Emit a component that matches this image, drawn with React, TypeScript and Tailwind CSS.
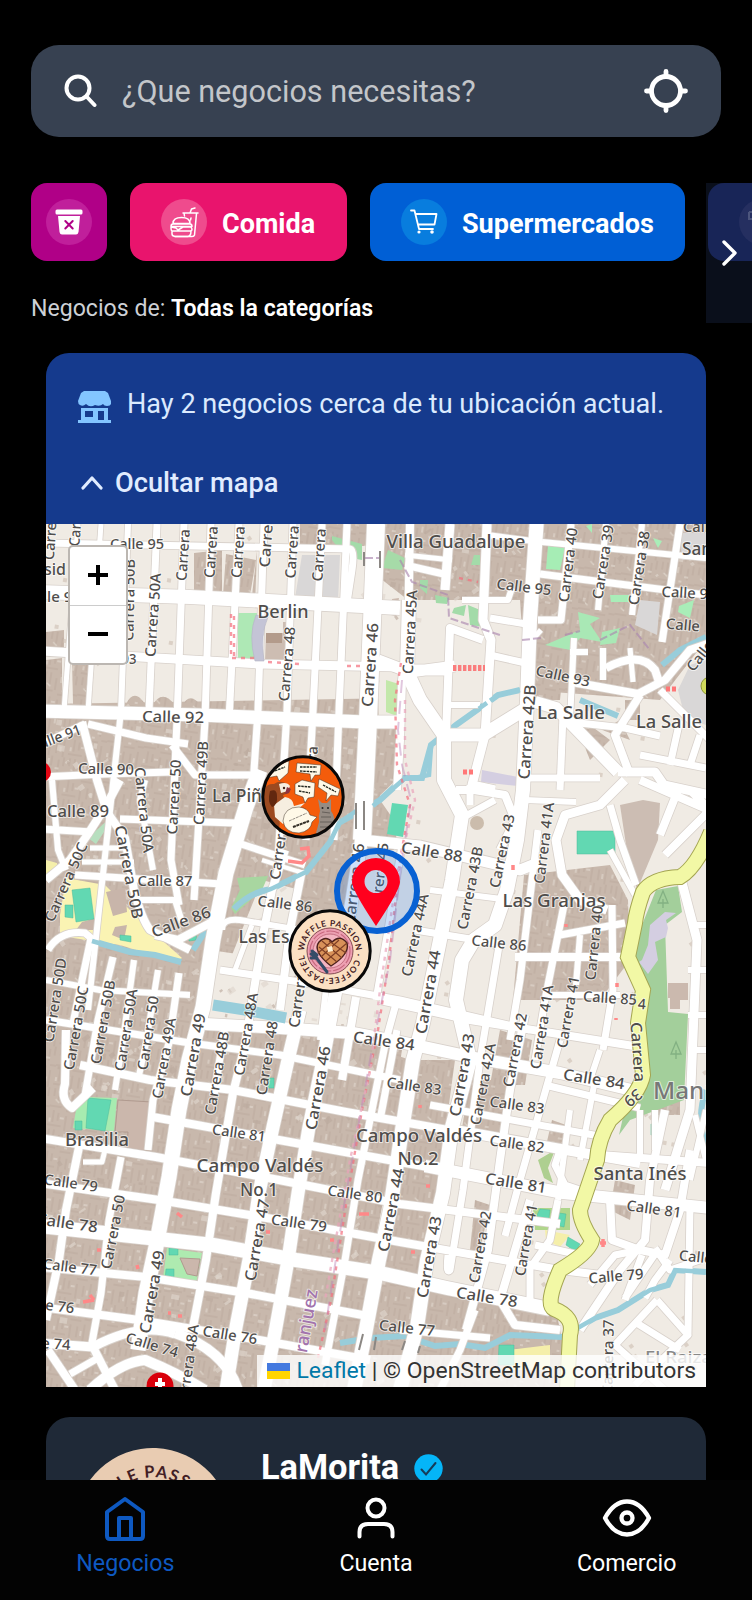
import React from "react";

type Label = [string, number, number, number, number, number?, string?];
type Road = [string, number];

const placeSize = 18;

const labels: Label[] = [
  ["Calle 95", 137, 544, 0, 54], ["Carrera", 183, 555, -86, 52], ["Carrera", 211, 552, -86, 52], ["Carrera", 238, 552, -86, 52],
  ["Carre", 266, 546, -86, 43], ["Carrera", 292, 552, -86, 53], ["Carrera", 319, 555, -86, 53], ["Carre", 50, 541, -86, 38],
  ["Car", 75, 535, -86, 23], ["sid", 55, 569, 0, 22, 17], ["lle 95", 62, 597, 0, 38, 15], ["Carrera 50B", 129, 600, -89, 82],
  ["Carrera 50A", 153, 615, -86, 84], ["93", 129, 659, 0, 15], ["Berlin", 283, 612, 0, 51, placeSize], ["Carrera 48", 287, 664, -85, 75],
  ["Carrera 46", 370, 665, -86, 84, 15.5], ["Calle 92", 173, 717, 1, 62, 15.5], ["Calle 91", 56, 738, -20, 52], ["Calle 90", 106, 769, 1, 56],
  ["Carrera 50", 174, 797, -87, 75], ["Carrera 49B", 201, 783, -87, 84], ["Carrera 50A", 144, 810, 84, 86], ["Carrera 50B", 129, 872, 79, 95, 15.5],
  ["La Piña", 242, 796, 0, 60, placeSize], ["Calle 89", 78, 812, 0, 62, 15.5], ["Calle 87", 165, 881, 0, 55], ["Calle 86", 181, 922, -20, 62, 15.5],
  ["Calle 86", 285, 904, 7, 55], ["Carrera 50C", 66, 882, -66, 85], ["Las Es", 264, 937, 0, 51, placeSize], ["Carrera 47", 280, 842, -82, 76],
  ["Carrera 47", 299, 990, -82, 76, 15], ["Carrera 50D", 55, 1000, -81, 85], ["Carrera 50C", 76, 1028, -80, 85], ["Carrera 50B", 103, 1022, -80, 85],
  ["Carrera 50A", 126, 1030, -81, 83], ["Carrera 50", 148, 1033, -81, 75], ["Carrera 49A", 164, 1058, -80, 82], ["Carrera 49", 193, 1055, -80, 84, 15.5],
  ["Carrera 48B", 217, 1073, -80, 84], ["Carrera 48A", 246, 1034, -80, 84], ["Carrera 48", 267, 1058, -81, 75], ["Carrera 46", 318, 1088, -80, 85, 15.5],
  ["Calle 84", 384, 1041, 8, 62, 15.5], ["Brasilia", 97, 1140, 0, 64, placeSize], ["Calle 81", 239, 1133, 8, 54], ["Campo Valdés", 260, 1166, 0, 127, placeSize],
  ["No.1", 259, 1190, 0, 38, placeSize], ["Calle 80", 355, 1194, 8, 55], ["Calle 79", 71, 1183, 8, 54], ["Calle 78", 67, 1223, 8, 62, 15.5],
  ["Carrera 50", 113, 1232, -79, 75], ["Calle 77", 70, 1267, 7, 54], ["Calle 76", 47, 1305, 7, 55], ["Calle 74", 43, 1343, 4, 55],
  ["Carrera 49", 152, 1292, -80, 84, 15.5], ["Carrera 47", 257, 1240, -80, 83, 15.5], ["Calle 79", 299, 1223, 8, 56], ["Calle 76", 230, 1335, 9, 55],
  ["Calle 74", 152, 1345, 17, 54], ["Carrera 48A", 188, 1366, -82, 84], ["ranjuez", 306, 1321, -80, 64, 18, "#a273ad"], ["Carrera 44", 391, 1210, -79, 85, 15.5],
  ["Campo Valdés", 419, 1136, 0, 126, placeSize], ["No.2", 418, 1159, 0, 41, placeSize], ["Calle 83", 414, 1086, 8, 55], ["Calle 83", 517, 1105, 8, 55],
  ["Calle 82", 517, 1144, 8, 55], ["Calle 81", 516, 1183, 9, 62, 15.5], ["Calle 84", 594, 1079, 9, 62, 15.5], ["Carrera 43", 462, 1075, -80, 84, 15.5],
  ["Carrera 42A", 483, 1084, -79, 83], ["Carrera 42", 515, 1050, -79, 75], ["Carrera 43", 429, 1257, -80, 83, 15.5], ["Carrera 42", 480, 1247, -80, 73],
  ["Carrera 41", 526, 1240, -80, 73], ["Calle 78", 487, 1297, 9, 62, 15.5], ["Calle 77", 407, 1328, 6, 56], ["Carrera 37", 608, 1357, -89, 75],
  ["Calle 79", 616, 1276, -5, 55], ["Calle 81", 654, 1209, 8, 55], ["Santa Inés", 640, 1174, 0, 93, placeSize], ["Manrique", 709, 1091, 0, 112, 23, "#777"],
  ["Calle 80", 706, 1258, 6, 54], ["El Raizal", 681, 1357, 0, 72, 17, "#888"], ["Carrera", 638, 1052, 86, 60, 15.5], ["39", 633, 1098, 140, 18, 15.5],
  ["Calle 88", 432, 852, 9, 62, 15.5], ["Carrera 43", 502, 851, -78, 75], ["Carrera 41A", 544, 843, -83, 82], ["Carrera 43B", 470, 888, -79, 84],
  ["Carrera 44A", 415, 935, -78, 84], ["Carrera 44", 428, 992, -80, 85, 15.5], ["Las Granjas", 554, 901, 0, 103, placeSize], ["Calle 86", 499, 943, 6, 55],
  ["Carrera 40", 594, 943, -84, 75], ["Carrera 41A", 542, 1027, -81, 85], ["Carrera 41", 568, 1012, -80, 73], ["Calle 85", 610, 998, 4, 54],
  ["4", 642, 1004, 5, 8], ["Carrera 45A", 410, 632, -87, 84], ["Carrera 42B", 527, 732, -86, 95, 16], ["Carrera 40", 568, 565, -83, 75],
  ["Carrera 39", 603, 562, -81, 75], ["Carrera 38", 639, 568, -81, 75], ["Villa Guadalupe", 456, 542, 0, 139, placeSize], ["San", 697, 549, 0, 30, placeSize],
  ["Calle 95", 524, 587, 7, 55], ["Calle 94", 689, 593, 3, 55], ["Calle", 683, 625, 5, 34], ["Calle", 700, 656, -52, 34],
  ["Calle 93", 563, 676, 12, 55], ["La Salle", 571, 713, 0, 68, placeSize], ["La Salle", 669, 722, 0, 66, placeSize], ["Carrera 46", 354, 884, -83, 82, 15.5],
  ["Carrera 45", 379, 880, -83, 75], ["Calle", 700, 527, 0, 34], ["Carrera", 311, 772, -86, 52],
];

const roads: Road[] = [
  ["M46 543L350 549Q355 550 352 570L347 603", 7], ["M40 592L190 597L400 608", 14], ["M40 651L140 657L260 664L400 667", 9],
  ["M40 711L200 715L365 722H400", 13], ["M101 524L88 711", 5], ["M78 524L64 711", 5], ["M128 524L121 711L88 1010", 6], ["M157 524L149 711", 7],
  ["M184 524L177 720L171 860L179 905", 7], ["M211 524L205 720L194 900", 7], ["M239 524L229 720", 7], ["M264 524L258 711L252 800", 7],
  ["M293 524L287 711L278 860", 7], ["M322 524L313 711L306 840", 7], ["M347 524L339 711L334 840", 7],
  ["M378 518L368 710L363 830L352 900L336 990L323 1060L309 1127L298 1193L288 1260L276 1327L264 1390", 13],
  ["M376 524L368 720L362 840", 18], ["M82 722L97 780L107 812L125 838L134 890Q142 920 150 930L190 950", 8],
  ["M88 724L146 738L188 744", 7], ["M172 745L195 775H260", 7], ["M40 745L85 724", 7], ["M40 777L105 774L170 772", 7],
  ["M120 780L106 806L88 834L70 860L46 880", 8], ["M40 829L92 832", 7], ["M120 819L235 823", 7], ["M90 848H130", 5], ["M82 862H134", 5],
  ["M75 875L222 884", 7], ["M52 780L58 850L66 870", 6], ["M136 900H175L182 922", 6], ["M145 780L140 800L153 870", 6],
  ["M260 770L246 807L226 873L213 940L203 1007L189 1060L179 1110L169 1177L156 1247L146 1293L138 1350", 15],
  ["M238 843L305 865", 7], ["M262 860L300 872", 4], ["M285 850L272 890L262 940L256 977L245 1045L233 1093L216 1193L206 1260L193 1327", 8],
  ["M302 870L290 930L280 1010", 8], ["M222 930Q222 918 240 920L300 930", 6], ["M220 970L300 982L400 1000L530 1030", 7],
  ["M252 925L235 970", 5], ["M155 935L178 940L212 922", 8], ["M48 950Q60 930 85 933L91 938L80 990L73 1023", 7],
  ["M46 980L100 990L190 995", 6], ["M46 1020L190 1043L280 1055L400 1080", 7], ["M113 957L98 1020L85 1095", 7], ["M134 960L123 1040L115 1090", 6],
  ["M158 970L146 1043L138 1080", 6], ["M179 973L169 1043L153 1100L148 1150", 7], ["M226 1020L214 1095", 7],
  ["M205 1024L280 1028L353 1033L400 1042L480 1059L560 1073L640 1092", 12], ["M80 1065L150 1080L233 1090L346 1112L420 1125L560 1150L640 1164", 8],
  ["M153 1117L279 1140L400 1162L445 1170", 8], ["M40 1138L156 1157L279 1180L400 1204L560 1224", 8], ["M40 1183L159 1200L279 1220L400 1242L560 1270L610 1276", 8],
  ["M40 1226L213 1245L296 1260L380 1273L447 1288L550 1309", 14], ["M40 1267L146 1277L246 1293L373 1317", 8],
  ["M40 1307L139 1320L259 1340L370 1360", 8], ["M40 1343L93 1347Q140 1322 175 1334", 9], ["M48 1350L75 1390", 8], ["M93 1347L115 1390", 8], ["M70 1374L98 1358", 7],
  ["M90 1390Q120 1362 145 1360Q175 1372 205 1390M175 1333Q225 1350 238 1390", 10],
  ["M66 1030L65 1084Q60 1100 72 1108L93 1088", 8], ["M79 1147L66 1210L59 1260L46 1320", 8], ["M121 1157L109 1220L101 1293L91 1348", 7], ["M83 1162H102L105 1150", 5],
  ["M300 1010L288 1060L273 1127L259 1193L249 1260L236 1327L226 1390", 13], ["M356 997L342 1080", 8], ["M397 1000L386 1040L372 1110L358 1180L345 1260L325 1365", 7],
  ["M327 980L320 1040", 6], ["M410 524L408 640L402 680L400 740L397 790", 8],
  ["M409 600L407 672L420 700L444 735V780L462 815L452 880L440 940L423 1023L413 1060L400 1143L390 1210L379 1260L364 1340L354 1390", 14],
  ["M378 660L404 670L446 670M410 672L455 666", 11], ["M447 735H483L530 706", 13], ["M450 524L445 590M487 524L483 620L491 640L485 735L472 785L495 790", 9],
  ["M446 735L450 628L483 640", 8], ["M450 705L480 705", 6], ["M405 565L448 575", 7], ["M405 555L452 560", 5], ["M490 655L530 664", 7],
  ["M537 518L530 620L527 700L523 790L517 840L507 890L495 925L474 940L462 960L456 1000L470 1060L452 1127L443 1193L427 1260L417 1327L400 1390", 14],
  ["M462 600H508L512 588", 6], ["M490 618L526 624", 7], ["M538 620H561L571 524", 7], ["M542 542L706 558", 6], ["M540 574L706 595", 7], ["M487 535L540 542", 6],
  ["M606 524L598 610", 6], ["M642 524L632 615", 6], ["M680 524L662 642", 7], ["M574 638L570 720M570 652H588M603 648V680", 6],
  ["M532 640L541 630", 5], ["M572 682L638 694L665 680L690 650L710 643", 8], ["M606 668Q640 650 655 670L660 685", 8], ["M630 648L633 682", 5],
  ["M640 695L615 735L630 775", 8], ["M535 702L556 708L618 772", 12], ["M563 715L560 790", 7], ["M525 778H600", 7], ["M660 690L710 740", 7], ["M570 722L625 728L660 736", 7],
  ["M640 755L706 768M670 765L680 720M690 765L700 735", 7], ["M618 772H655L664 785L710 795M625 780L600 805L565 815L556 840L562 875L580 900L607 910", 9],
  ["M456 790L474 790L505 795L515 820L500 850", 8], ["M525 800L576 802", 6], ["M470 805V785M495 800L462 818", 7], ["M362 840L420 846L520 870L540 862", 11],
  ["M538 830L532 880L520 980L510 1040", 7], ["M565 900L545 1000L535 1060", 7], ["M580 935L576 985", 6], ["M610 805L620 840L636 885", 7], ["M660 835L680 785M665 855L710 810L690 790M640 780L720 815", 8],
  ["M680 875L697 940L690 1110L665 1190", 9], ["M610 850L635 895", 6], ["M612 905L613 990L603 1050", 7], ["M415 930L495 943", 7], ["M430 890L510 900", 6], ["M515 957H632", 8], ["M560 935L625 923", 7], ["M545 995H620", 6], ["M380 1000L470 1020L640 1047", 8],
  ["M397 1030L380 1120", 7], ["M500 940L480 1060L463 1190L450 1270Q446 1275 448 1255", 7], ["M525 1015L510 1090L500 1160L488 1250L466 1330", 8],
  ["M560 1040L540 1110L520 1180L505 1236", 7], ["M600 1050L590 1080", 6], ["M545 1085L640 1108", 7], ["M570 1110L558 1200", 6], ["M595 1080L580 1160", 6], ["M430 1105L610 1138", 7],
  ["M425 1166L563 1193L710 1208", 12], ["M560 1150L555 1165L565 1185L580 1190", 7], ["M530 1200L500 1300L515 1325L560 1330", 8], ["M558 1200L550 1240L530 1268V1300", 7],
  ["M535 1245L580 1255M475 1310L460 1350L440 1390", 7], ["M400 1330L490 1338", 7], ["M450 1128L600 1155L710 1163", 8], ["M665 1110L650 1180L645 1240L620 1270L580 1330", 8], ["M610 1200L612 1240L640 1250L665 1255L680 1210L690 1150", 8],
  ["M640 1250L615 1255L590 1285", 7], ["M642 1255L625 1300M655 1248L670 1270L700 1260M655 1254L625 1298M645 1298L655 1280L670 1260", 7],
  ["M657 1300L615 1345L665 1390M657 1300L688 1335L635 1385M635 1322L680 1350M688 1335L690 1205", 7], ["M640 1110V1160M655 1110V1150M706 1110L690 1180", 6], ["M695 1115L706 1160", 6], ["M690 925H710M688 970H710M688 1015H710M688 1050H710", 6],
  ["M402 845L388 930L376 1000", 7],
];

const beige = [
  "M46 524H260L252 596H400V698L46 704Z", "M376 575L408 600H520L526 690L660 700L706 640V1390H572L556 1310L366 1275L402 1050L362 1032L398 826L380 800Z",
  "M210 950L345 970L398 1000L382 1040L205 1022Z", "M262 880L300 890L276 990H218Z", "M366 850L400 850L375 1005L340 990Z", "M258 524H300V546H366V605H255Z",
];

const brownPatches = [
  "M194 553L222 550V592H194ZM226 554L256 560L250 595H223ZM524 875L610 865L628 900L630 960L600 1000L513 1000ZM46 632L64 630V648H46Z",
  "M46 660L62 658V704H46ZM72 660L91 666V704H73ZM126 704Q133 690 142 700L146 705ZM152 706Q162 688 175 705ZM182 706Q190 690 202 707ZM207 708Q220 695 225 708ZM234 710Q247 697 253 711ZM262 712Q275 696 280 712ZM318 712Q330 696 335 714ZM344 715Q352 699 360 715Z",
  "M535 650H565L560 700H530ZM570 710L610 740L590 760ZM376 725H396V780L370 805Z",
  "M382 1050L410 1060L370 1270H338L366 1130ZM400 1060H455L425 1280H375ZM470 1080H510L500 1140H460ZM500 1030L532 1040L525 1085H490ZM552 1120L566 1125L560 1150H545ZM428 1290L460 1300L455 1335H420ZM655 1085H680V1115H655Z",
  "M615 1180L635 1185L630 1220L610 1210ZM475 1200L490 1205L480 1250H470ZM625 700H640V720H625ZM602 730L620 720L630 740Z",
];

const greens: [string, string][] = [
  ["M238 613H258L256 662H238Z", "#aee8b5"], ["M386 680L402 685L397 716L386 712Z", "#c3e8aa"], ["M548 546L565 548L560 570L546 569Z", "#a6edb5"],
  ["M332 536L362 544V560Q345 558 332 540Z", "#a3dba9"], ["M388 550L405 558L402 570L382 568Z", "#a6dba8"], ["M420 580H428L427 594L420 588ZM435 595L449 598L447 604L436 603ZM468 605L485 612L484 627L470 625ZM474 555H480V565H471ZM454 608L466 605L464 616L452 613Z", "#a3dba9"],
  ["M578 612L600 618L590 624L602 642L580 638L570 650L545 645L580 630Z", "#a9e8b5"], ["M602 632L620 628L616 643L600 645Z", "#a9e8b5"], ["M679 606L694 600L690 618L678 612ZM610 595H629V602H611ZM586 526L592 524L592 533ZM653 538L662 541L658 548Z", "#a9edb8"],
  ["M88 838L112 816L118 820L108 826L96 844Z", "#b7dfbf"], ["M237 878L268 876L262 890L235 914L231 908L240 890Z", "#a8d6a0"], ["M86 1097L117 1098L114 1131L73 1128L76 1110Z", "#a7ebb0"],
  ["M167 1248L202 1253L196 1284L163 1278Z", "#aeeab0"], ["M656 890L678 886L682 912L665 925L668 1012L688 1014L684 1100L630 1120L619 1135L628 1095L643 1070V995L628 960L640 930Z", "#a3cf9b"],
  ["M538 1160L555 1150L548 1168L553 1183L544 1178Z", "#aecf90"], ["M533 1208H570V1230H535Z", "#b0d68c"],
];
const sports = [
  "M577 831H615V854H577Z", "M72 890L90 888L94 919L76 922ZM65 905L73 905L73 918L65 917Z", "M88 1098L111 1100L105 1131L86 1128ZM75 1121H82V1130H75Z",
  "M169 1248H178V1255H169ZM166 1269H174V1279H165ZM540 1209L550 1210L548 1226L534 1221ZM552 1212L566 1214L564 1227L552 1224ZM568 1237L580 1244L576 1252L566 1245ZM499 1345H514V1365H498Z",
  "M120 935L131 936V942L120 940ZM189 932L198 925L196 940L189 941ZM651 1124H656V1135H651ZM268 1078H274V1088H268Z",
];

function pseudo(i: number) {
  const v = Math.sin(i * 127.1 + 11.7) * 43758.5453;
  return v - Math.floor(v);
}

const details = Array.from({ length: 900 }, (_, i) => ({
  x: 46 + pseudo(i) * 660,
  y: 524 + pseudo(i + 2000) * 863,
  w: 2 + pseudo(i + 4000) * 6,
  h: 2 + pseudo(i + 6000) * 4,
  light: pseudo(i + 8000) > 0.35,
}));

const Tree = ({ x, y }: { x: number; y: number }) => (
  <path d={`M${x} ${y - 8}L${x - 5} ${y + 4}H${x + 5}ZM${x} ${y}V${y + 9}`} fill="none" stroke="#83b183" strokeWidth="1.3" />
);

const WaffleLogo = ({ id, cream = "#fbe0c3", turn = 0 }: { id: string; cream?: string; turn?: number }) => (
  <g transform={`rotate(${turn})`}>
    <circle r="40" fill={cream} />
    <path id={id} d="M-26 1A26 26 0 1 1 26 1A26 26 0 1 1 -26 1" fill="none" />
    <text fontFamily="Lato, sans-serif" fontWeight="700" fontSize="8.4" fill="#432024">
      <textPath href={`#${id}`} textLength="158" startOffset="1">WAFFLE PASSION · COFFEE·PASTEL</textPath>
    </text>
    <circle r="23" fill="#eda0b2" stroke="#693039" strokeWidth="0.8" />
    <circle r="20" fill="none" stroke="#c8687f" strokeWidth="1.2" strokeDasharray="13 2" />
    <circle r="17" fill="#f4b4c1" stroke="#b75e72" strokeWidth="0.8" />
    <path d="M1 15Q-18 0 -11 -9Q-4 -16 2 -9Q10 -17 17 -8Q20 3 1 15Z" fill="#d89159" stroke="#4b211d" strokeWidth="1.4" />
    <path d="M-11 -4L7 11M-8 -10L12 7M-1 -10L16 2M17 -8L-4 10M9 -11L-9 6M1 -9L-12 2" stroke="#7d3d24" strokeWidth="1.1" />
    <path d="M-3 -4L2 -5L3 0L-2 1Z" fill="#fff1d4" />
    <path d="M-18 0L-13 4M-19 3L-14 6M-19 7L-13 7M-15 5L-3 21" stroke="#344c68" strokeWidth="3" strokeLinecap="round" />
  </g>
);

function PetMarker() {
  return (
    <g transform="translate(303 797)">
      <clipPath id="pet"><circle r="39" /></clipPath>
      <circle r="40" fill="#f45c0b" />
      <g clipPath="url(#pet)">
        <path d="M-36 -29L-14 -36L-15 -24L-24 -16L-26 -21L-37 -19ZM-6 -34L18 -32L17 -22L12 -22L8 -16L7 -23L-7 -25ZM-8 -13L-1 -17L12 -14L11 0L5 1L2 6L0 0L-8 -3ZM16 -18L37 -8L35 -1L28 -2L23 4L24 -4L15 -10Z" fill="#fff9e8" stroke="#41342b" strokeWidth="0.5" />
        <path d="M-3 -30H14M-3 -26L14 -25M-31 -25L-18 -30M-5 -11L8 -10M-4 -6L7 -4M20 -12L33 -5" stroke="#252a22" strokeWidth="1.4" strokeDasharray="2.5 0.8" />
        <path d="M-40 -6Q-36 -14 -29 -13Q-22 -18 -15 -12L-13 -9L-14 -4L-20 -2L-17 7L-27 18Q-20 25 -26 36L-40 25Z" fill="#9c4a20" />
        <path d="M-24 -13Q-16 -16 -13 -11L-15 -6L-22 -4ZM-29 8L-18 0Q-10 1 -9 9L2 6L-6 13L-14 16L-20 27L-28 20Z" fill="#f6eee0" />
        <path d="M-33 -6Q-26 -9 -26 -1Q-25 8 -31 10Q-36 5 -33 -6Z" fill="#62280f" /><circle cx="-19" cy="-9" r="1.2" fill="#402218" />
        <path d="M-16 -10L-12 -8L-14 -4L-18 -3Z" fill="#8f3440" />
        <path d="M15 2L19 6H24L28 2L28 14Q33 20 31 30L26 36H13L16 25Q15 19 17 14Z" fill="#958b83" />
        <path d="M19 15L27 16M18 20L28 20M17 25L29 25M17 30L29 30" stroke="#67605b" strokeWidth="1.2" />
        <circle cx="19.5" cy="11" r="1" fill="#222" /><circle cx="25" cy="11" r="1" fill="#222" />
        <path d="M-20 24Q-19 10 -4 10Q5 11 7 18L14 20L9 25Q8 34 -4 36Q-18 36 -20 24Z" fill="#fff9e8" stroke="#41342b" strokeWidth=".5" />
        <path d="M-14 24L4 16" stroke="#77716a" strokeWidth="0.8" strokeDasharray="3 0.8" /><path d="M-10 30L6 24" stroke="#353028" strokeWidth="2" strokeDasharray="3 0.6" />
      </g>
      <circle r="40.2" fill="none" stroke="#080808" strokeWidth="3" />
    </g>
  );
}

function StreetMap() {
  return (
    <svg className="block h-full w-full" viewBox="46 524 660 863">
      <defs>
        <pattern id="roofs" width="37" height="41" patternUnits="userSpaceOnUse" patternTransform="rotate(9)">
          <rect width="37" height="41" fill="#c8b8ac" />
          <path d="M3 0V8M8 0V12M14 5V17M22 0V10M29 3V15M34 0V9M0 18H12M17 21H28M31 19H37M5 22V34M10 24V32M18 26V41M25 27V38M32 24V41M0 37H14" stroke="#bcab9f" strokeWidth="1" />
          <path d="M5 11L9 14M19 3V9M26 12H30M12 29H16M29 31V36M2 30V34M21 17H24" stroke="#dcd2c8" strokeWidth="1.4" />
        </pattern>
      </defs>
      <rect x="46" y="524" width="660" height="863" fill="url(#roofs)" />
      {beige.map((d) => <path key={d} d={d} fill="#f0ebe4" />)}
      {brownPatches.map((d) => <path key={d} d={d} fill="url(#roofs)" />)}
      {details.map((b, i) => {
        const inOpenArea = (b.x < 360 && b.y < 700) || (b.x > 380 && b.y > 620);
        if (inOpenArea && (b.x > 230 || i % 3 > 0) && i % 5 > 0) return null;
        return <rect key={i} x={b.x} y={b.y} width={inOpenArea ? 4 : b.w} height={inOpenArea ? 4 : b.h} transform={`rotate(${i % 2 ? 10 : -35} ${b.x} ${b.y})`} fill={inOpenArea ? "#d0c2b5" : b.light ? "#dfd6cd" : "#bbaa9e"} opacity=".65" />;
      })}
      <path d="M302 555H340L338 602L295 598ZM680 533H706V560H682ZM690 665L706 660V725L685 718L678 690ZM640 600L660 602L657 635L635 625Z" fill="#d9d7d7" />
      <path d="M266 633H283V622H291V662H265Z" fill="#cdbdb2" /><path d="M266 633H282V643H266Z" fill="#b39b8b" />
      <path d="M660 803L658 840L637 890L626 845L620 805L643 800Z" fill="#ccbdb3" /><circle cx="477" cy="823" r="7" fill="#cbbcac" />
      <path d="M392 599L399 598L396 616L391 615Z" fill="#cbb9ae" />
      <path d="M66 878L105 885L145 925L182 958L175 962L120 945L60 936L60 915Z" fill="#faf3b3" /><path d="M46 860L57 863V875H46ZM508 1350L550 1345V1370L505 1370ZM545 1230L570 1235L560 1247L546 1240Z" fill="#f5efaa" />
      <path d="M106 892L125 888L127 912L113 916ZM82 922L96 918L96 930H76ZM115 927L127 925L124 940L112 935Z" fill="#c8b5aa" />
      {greens.map(([d, color]) => <path key={d} d={d} fill={color} />)}
      <path d="M118 1100L152 1102L146 1151L127 1148L128 1132L115 1132ZM180 1258L200 1259L197 1276L187 1274Z" fill="#cbb7ac" stroke="#b09a8f" />
      <path d="M482 770L518 777V786L481 782ZM642 960L648 945L650 925L665 912L676 913L666 920L668 928L666 937L655 942L658 960L648 974L639 962Z" fill="#d4cee1" />
      <path d="M668 983H688V1000H680V1009H670V998H668Z" fill="#cbb9ae" />
      {sports.map((d) => <path key={d} d={d} fill="#62d8b2" stroke="#4fba9a" strokeWidth=".5" />)}
      <g fill="none" stroke="#98cdda" strokeWidth="6">
        <path d="M234 909Q250 892 271 889L306 872L330 842L339 823L380 800L404 778H422L431 745L456 725L498 695L520 690" /><path d="M92 941L130 952L155 955L181 962" />
        <path d="M193 950L206 930" /><path d="M662 665L680 650L706 637M580 700L618 716" />
        <path d="M340 1343L370 1338L405 1336L435 1346L460 1344L485 1348L510 1335L562 1337L595 1318L618 1310L650 1290L668 1285L675 1270L706 1272M706 1090Q695 1120 708 1150" />
      </g>
      {roads.map(([d, w]) => <path key={d} d={d} fill="none" stroke="#d8d1cb" strokeWidth={w + 1.6} strokeLinejoin="round" />)}
      {roads.map(([d, w]) => <path key={d} d={d} fill="none" stroke="#fff" strokeWidth={w} strokeLinejoin="round" />)}
      <path d="M256 615Q248 635 255 661H264Q260 635 268 617Z" fill="#c4c4d6" stroke="#b4b4c5" strokeWidth=".6" />
      <path d="M392 803L408 805L403 837L387 834Z" fill="#62d8b2" />
      <path d="M213 1005L245 1010L286 1018" fill="none" stroke="#98cdda" strokeWidth="11" />
      <g fill="none" stroke="#98cdda" strokeWidth="4.5"><path d="M234 908L248 897L271 889L306 872L330 842L339 823L356 811M373 806L404 779" /><path d="M456 725L498 695L520 690" strokeDasharray="10 4" /><path d="M431 747L429 775L410 779M92 941L130 952L155 955L181 962M562 1337L595 1318L618 1310L650 1290L668 1285L675 1270L706 1272" /></g>
      <g fill="none" stroke="#f56f7d" strokeWidth="2.4" strokeDasharray="4 5" opacity=".7">
        <path d="M401 663L395 700L397 765L410 805L400 860L389 960L378 1030L362 1110L346 1205L331 1300L318 1358" /><path d="M405 700V760L415 800L397 875L380 990L370 1070L350 1160L325 1300" stroke="#eba4bb" />
        <path d="M231 614V658H257M234 616V656M268 662L300 664M347 666H362M459 578L478 582" />
      </g>
      <path d="M402 680L398 730L402 765L411 800L400 875L390 960L370 1060L345 1200L325 1330" fill="none" stroke="#bd83b5" strokeWidth="2" strokeDasharray="13 8" opacity=".45" />
      <path d="M365 558H380M400 560L412 582L448 595L449 618L500 635M522 640L541 638M565 635L580 631M600 640L630 625L650 650" fill="none" stroke="#aa87af" strokeWidth="2" strokeDasharray="8 3" opacity=".65" />
      <path d="M453 668H485" stroke="#fa7d7d" strokeWidth="6" strokeDasharray="3.4 1.6" />
      <path d="M666 689H676M463 772H475" stroke="#f77" strokeWidth="5" strokeDasharray="4 2" />
      <path d="M300 849L308 848L309 856L302 863L288 861M177 1213L182 1217M90 1295L94 1300M83 1302L94 1300M101 1250H97M137 1265L138 1269M168 1313H171M178 1316H182M266 1232H270M330 1240H334M359 1214H369M411 1252H415M426 1186H430M420 1105V1108M600 1243H606M603 1239V1247M513 865V870M617 983V987M566 924V927M616 1018V1020" fill="none" stroke="#f88" strokeWidth="3.5" />
      <path d="M364 801V830M356 803V829M364 552V566M380 551V568M363 1334L359 1350M376 1337L374 1350M405 1341L402 1350M420 1346L418 1353" stroke="#8b8783" strokeWidth="2" />
      <path d="M711 832Q696 868 680 877Q652 878 643 892Q636 912 635 923L628 957L643 990L638 1023L643 1075Q640 1094 610 1120Q598 1140 597 1160L580 1210Q580 1222 592 1240Q590 1252 560 1270Q545 1304 554 1309Q575 1317 570 1335L567 1390" fill="none" stroke="#a4a552" strokeWidth="16" />
      <path d="M711 832Q696 868 680 877Q652 878 643 892Q636 912 635 923L628 957L643 990L638 1023L643 1075Q640 1094 610 1120Q598 1140 597 1160L580 1210Q580 1222 592 1240Q590 1252 560 1270Q545 1304 554 1309Q575 1317 570 1335L567 1390" fill="none" stroke="#f2f8a5" strokeWidth="14" />
      <Tree x={663} y={899} /><Tree x={676} y={1050} />
      <circle cx="710" cy="686" r="9" fill="#d0da5c" stroke="#8f9937" />
      <circle cx="41" cy="772" r="10" fill="#e30613" />
      <circle cx="160" cy="1386" r="13.5" fill="#d9000b" /><path d="M160 1378V1387M155 1384H165" stroke="#fff" strokeWidth="4" />
      <g fontFamily="'Noto Sans', 'Open Sans', sans-serif" fontWeight="500" textAnchor="middle" stroke="#fff" strokeWidth="2" strokeLinejoin="round" paintOrder="stroke" strokeOpacity=".65">
        {labels.map(([text, x, y, angle, length, size = 14.5, color = "#4f4d4b"], i) => (
          <text key={i} transform={`translate(${x} ${y}) rotate(${angle})`} y={size * 0.35} fontSize={size} textLength={length} lengthAdjust="spacingAndGlyphs" fill={color}>{text}</text>
        ))}
      </g>
      <PetMarker />
      <circle cx="377" cy="891" r="40" fill="#3683e6" fillOpacity=".25" stroke="#0861d3" strokeWidth="6" />
      <path d="M376 926Q352 890 352 882A24 24 0 0 1 400 882Q400 890 376 926ZM376 870A11.5 11.5 0 1 0 376 893A11.5 11.5 0 1 0 376 870Z" fill="#ff001d" fillRule="evenodd" />
      <g transform="translate(330 951)"><WaffleLogo id="waffle-ring-map" /><circle r="40.2" fill="none" stroke="#080808" strokeWidth="3" /></g>
    </svg>
  );
}

function Chip({ children, label, className }: { children: React.ReactNode; label: string; className: string }) {
  return (
    <button className={`flex h-[78px] shrink-0 items-center gap-[15px] rounded-[16px] pl-[31px] text-[27px] font-bold text-white ${className}`}>
      {children}<span className="pt-[5px]">{label}</span>
    </button>
  );
}

export default function App() {
  return (
    <div className="flex h-[1600px] w-[752px] flex-col overflow-hidden bg-black font-[Roboto,sans-serif]">
      <header className="h-[353px] shrink-0 pt-[45px]">
        <div className="ml-[31px] flex h-[92px] w-[690px] items-center rounded-[28px] bg-[#374151] pl-[33px] pr-[33px]">
          <svg width="33" height="34" viewBox="0 0 33 34" fill="none" stroke="#fff" strokeWidth="4" strokeLinecap="round"><circle cx="14" cy="14" r="11.5" /><path d="M22.5 22.5L30.5 31" /></svg>
          <span className="ml-[25px] grow pt-[2px] text-[30.6px] whitespace-nowrap text-[#c3c6ca]">¿Que negocios necesitas?</span>
          <svg width="44" height="44" viewBox="0 0 44 44" fill="none" stroke="#fff" strokeWidth="4.8" strokeLinecap="round"><circle cx="22" cy="22" r="14.5" /><path d="M22 2.5V7M22 37V41.5M2.5 22H7M37 22H41.5" /></svg>
        </div>
        <div className="relative mt-[46px] flex h-[78px] gap-[23px] pl-[31px]">
          <button className="flex h-[78px] w-[76px] shrink-0 items-center justify-center rounded-[16px] bg-[#b00087]">
            <span className="flex size-[46px] items-center justify-center rounded-full bg-[#c01f9b]"><svg width="28" height="26" viewBox="0 0 28 26"><rect x=".5" y=".5" width="27" height="5" rx="1.5" fill="#fff" /><path d="M3 7H25L23.5 23Q23 25.5 21 25.5H7Q5 25.5 4.5 23Z" fill="#fff" /><path d="M10.3 12L17.7 19.5M17.7 12L10.3 19.5" stroke="#b00087" strokeWidth="2" strokeLinecap="round" /></svg></span>
          </button>
          <Chip label="Comida" className="w-[217px] bg-[#e9146d]">
            <span className="flex size-[46px] items-center justify-center rounded-full bg-[#ef4b8d]"><svg width="31" height="31" viewBox="0 0 31 31" fill="none" stroke="#fff" strokeWidth="1.5" strokeLinecap="round" strokeLinejoin="round"><path d="M14 6H29M21 6L22.5 2L26 1M15 6L15.5 9M27.5 6.5L25.5 28Q25 29.5 23 29.5H6M22 11L21.5 13" /><path d="M4 16.5Q4 10.5 12.5 10.5Q21 10.5 21 16.5ZM2 19.5Q2 17 4 17H21Q23 17 23 19.5ZM2 20L7 21L9 23L14 20H22L23 22Q23 24 21 24H3Q2 24 2 20ZM3 24V27Q3 29 6 29.5H19Q22 29 22 24" /></svg></span>
          </Chip>
          <Chip label="Supermercados" className="w-[315px] bg-[#005fd5]">
            <span className="flex size-[46px] items-center justify-center rounded-full bg-[#087dde]"><svg width="28" height="26" viewBox="0 0 28 26" fill="none" stroke="#fff" strokeWidth="1.8" strokeLinecap="round" strokeLinejoin="round"><path d="M1 1.5H4.5L9 20H23M5.5 5H26.5L24.5 15.5H8" /><circle cx="9" cy="23" r="1.6" fill="#fff" stroke="none" /><circle cx="22" cy="23" r="1.8" fill="#fff" stroke="none" /></svg></span>
          </Chip>
          <div className="absolute top-0 right-0 h-[140px] w-[46px] overflow-hidden bg-[#0a0f1b]">
            <div className="ml-[2px] h-[78px] w-[90px] rounded-[16px] bg-[#182557] pt-[16px] pl-[31px]"><div className="size-[46px] rounded-full bg-[#252f60] pt-[12px] pl-[9px]"><svg width="20" height="12" viewBox="0 0 20 12" fill="none" stroke="#4c557d" strokeWidth="2"><path d="M1 1H18M1 1V8H10" /></svg></div></div>
            <svg className="absolute top-[57px] left-[15px]" width="18" height="26" viewBox="0 0 18 26" fill="none" stroke="#fff" strokeWidth="3.4" strokeLinecap="round" strokeLinejoin="round"><path d="M3 2L14 13L3 24" /></svg>
          </div>
        </div>
        <p className="mt-[34px] ml-[31px] text-[23.1px] leading-[28px] text-[#cdd0d5]">Negocios de: <span className="font-semibold text-white">Todas la categorías</span></p>
      </header>

      <main className="mx-[46px] flex h-[1127px] shrink-0 flex-col overflow-hidden">
        <section className="h-[171px] shrink-0 rounded-t-[23px] bg-[#153a8d] pt-[34px] pl-[32px]">
          <div className="flex h-[34px] items-center gap-[16px] text-[27.1px] whitespace-nowrap text-[#dbeafe]">
            <svg className="mt-[5px]" width="33" height="32" viewBox="0 0 33 32" fill="#83c5ff"><path d="M6 0H27L30 2L33 10Q34 15 29 15Q26 15 25 13Q22 16 17 14Q12 17 8 13Q5 16 2 14Q0 13 0 10L3 2Z" /><path d="M3 17H30V29H33V32H0V29H3ZM7 20V26H15V20ZM20 20V29H26V20Z" fillRule="evenodd" /></svg>
            <span>Hay 2 negocios cerca de tu ubicación actual.</span>
          </div>
          <button className="mt-[45px] ml-[3px] flex h-[34px] items-center gap-[12px] text-[27.2px] font-medium text-[#e1ecff]"><svg width="22" height="16" viewBox="0 0 22 16" fill="none" stroke="currentColor" strokeWidth="3.2" strokeLinecap="round" strokeLinejoin="round"><path d="M2 13L11 3L20 13" /></svg>Ocultar mapa</button>
        </section>
        <section className="relative h-[863px] shrink-0 overflow-hidden">
          <StreetMap />
          <div className="absolute top-[21px] left-[22px] flex h-[120px] w-[60px] flex-col overflow-hidden rounded-[5px] border-2 border-[#bcb7b2] bg-white">
            <button className="flex h-[59px] items-center justify-center border-b border-[#ccc] pb-[2px]"><svg width="20" height="20" viewBox="0 0 20 20" stroke="#000" strokeWidth="4"><path d="M10 0V20M0 10H20" /></svg></button>
            <button className="flex flex-1 items-center justify-center pb-[2px]"><svg width="20" height="20" viewBox="0 0 20 20" stroke="#000" strokeWidth="4"><path d="M0 10H20" /></svg></button>
          </div>
          <div className="absolute right-0 bottom-0 flex h-[32px] items-center bg-white/80 pr-[10px] pl-[10px] text-[22.95px] whitespace-nowrap text-[#333]">
            <svg className="mr-[6px]" width="23" height="16" viewBox="0 0 23 16"><path fill="#4479df" d="M0 0H23V8H0Z" /><path fill="#ffd500" d="M0 8H23V16H0Z" /></svg><span className="text-[#0078a8]">Leaflet</span><span>&nbsp;| © OpenStreetMap contributors</span>
          </div>
        </section>
        <section className="mt-[30px] flex h-[200px] shrink-0 rounded-[24px] bg-[#1f2937] pt-[31px] pl-[29px]">
          <svg className="shrink-0" width="156" height="156" viewBox="-40 -40 80 80"><WaffleLogo id="waffle-ring-card" cream="#e9ccb2" turn={-9} /></svg>
          <div className="ml-[30px] flex h-[40px] items-center gap-[15px] text-[34.4px] font-bold text-white"><span>LaMorita</span><svg width="29" height="29" viewBox="0 0 29 29"><circle cx="14.5" cy="14.5" r="14.2" fill="#05b5f8" /><path d="M7.5 15.5L12 20.5L21.5 9" fill="none" stroke="#163c5a" strokeWidth="2" strokeLinecap="round" /></svg></div>
        </section>
      </main>

      <nav className="flex h-[120px] shrink-0 bg-[#030303] text-[23.2px] text-white">
        <a className="flex flex-1 flex-col items-center pt-[15px] text-[#0e59c1]"><svg width="48" height="48" viewBox="0 0 48 48" fill="none" stroke="currentColor" strokeWidth="4" strokeLinejoin="round"><path d="M24 4L42 17V41Q42 44 39 44H9Q6 44 6 41V17ZM18 44V23H30V44" /></svg><span className="mt-[7px] leading-[26px]">Negocios</span></a>
        <a className="flex flex-1 flex-col items-center pt-[15px]"><svg width="48" height="48" viewBox="0 0 48 48" fill="none" stroke="currentColor" strokeWidth="4" strokeLinecap="round"><circle cx="24" cy="13" r="8.5" /><path d="M7.5 41.5V37Q7.5 29 16 29H32Q40.5 29 40.5 37V41.5" /></svg><span className="mt-[7px] leading-[26px]">Cuenta</span></a>
        <a className="flex flex-1 flex-col items-center pt-[15px]"><svg width="50" height="48" viewBox="0 0 50 48" fill="none" stroke="currentColor" strokeWidth="4.3" strokeLinejoin="round"><path d="M3 23Q12 6.5 25 6.5Q38 6.5 47 23Q38 39.5 25 39.5Q12 39.5 3 23Z" /><circle cx="25" cy="23" r="5.5" /></svg><span className="mt-[7px] leading-[26px]">Comercio</span></a>
      </nav>
    </div>
  );
}
